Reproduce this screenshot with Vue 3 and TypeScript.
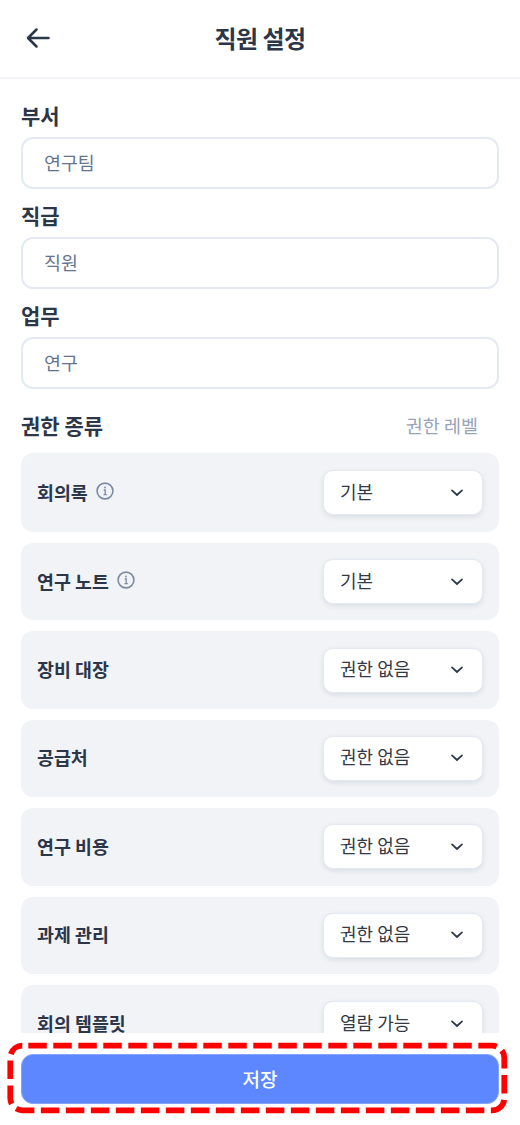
<script setup lang="ts">
interface Field { label: string; value: string }
interface Perm { name: string; level: string; info?: boolean }
const fields: Field[] = [
  { label: '부서', value: '연구팀' },
  { label: '직급', value: '직원' },
  { label: '업무', value: '연구' },
]
const perms: Perm[] = [
  { name: '회의록', level: '기본', info: true },
  { name: '연구 노트', level: '기본', info: true },
  { name: '장비 대장', level: '권한 없음' },
  { name: '공급처', level: '권한 없음' },
  { name: '연구 비용', level: '권한 없음' },
  { name: '과제 관리', level: '권한 없음' },
  { name: '회의 템플릿', level: '열람 가능' },
]
</script>

<template>
  <div class="screen">
    <header class="header">
      <svg class="back" width="26" height="26" viewBox="0 0 26 26" fill="none" stroke="#2b3648" stroke-width="2.5" stroke-linecap="round" stroke-linejoin="round">
        <path d="M23.5 13H3.5M11.5 4.5 3 13l8.5 8.5" />
      </svg>
      <h1 class="title">직원 설정</h1>
    </header>

    <main class="content">
      <div v-for="f in fields" :key="f.label" class="field">
        <div class="label">{{ f.label }}</div>
        <div class="input">{{ f.value }}</div>
      </div>

      <div class="perm-head">
        <span class="label">권한 종류</span>
        <span class="perm-level">권한 레벨</span>
      </div>

      <div class="perm-list">
        <div v-for="p in perms" :key="p.name" class="perm">
          <div class="perm-name">
            <span>{{ p.name }}</span>
            <svg class="info" width="18" height="18" v-if="p.info" viewBox="0 0 18 18" fill="none" stroke="#7c8aa3">
              <circle cx="9" cy="9" r="7.9" stroke-width="1.6" />
              <path d="M7.7 8h1.5v4.6M7.5 12.7h3.3" stroke-width="1.3" />
              <circle cx="9" cy="5.5" r="0.9" fill="#7c8aa3" stroke="none" />
            </svg>
          </div>
          <div class="select">
            <span class="select-text">{{ p.level }}</span>
            <svg width="14" height="14" viewBox="0 0 14 14" fill="none" stroke="#2b3648" stroke-width="1.7" stroke-linecap="round" stroke-linejoin="round">
              <path d="M2 4.4 7 9 12 4.4" />
            </svg>
          </div>
        </div>
      </div>
    </main>

    <footer class="footer">
      <button class="save" type="button">저장</button>
      <svg class="annotation" width="520" height="92" viewBox="0 0 520 92" fill="none">
        <rect x="10.3" y="12.7" width="494" height="64.6" rx="12" stroke="#fe0000" stroke-width="5.8" stroke-dasharray="18.5 6.5" stroke-dashoffset="19" />
      </svg>
    </footer>
  </div>
</template>

<style>
html, body { margin: 0; background: #fff; }
</style>

<style scoped>
.screen {
  width: 520px;
  height: 1125px;
  display: flex;
  flex-direction: column;
  overflow: hidden;
  background: #fff;
  font-family: "Noto Sans CJK KR", "Noto Sans", sans-serif;
  color: #2b3648;
}
.header {
  flex: none;
  height: 79px;
  box-sizing: border-box;
  position: relative;
  display: flex;
  align-items: center;
  justify-content: center;
  border-bottom: 2px solid #f1f3f7;
}
.back { position: absolute; left: 25px; top: 25px; }
.title { margin: 0 0 2px; font-size: 24px; font-weight: 700; letter-spacing: -0.6px; line-height: 1; }
.content {
  flex: 1;
  min-height: 0;
  overflow: hidden;
  padding: 22px 21px 0;
}
.field { margin-bottom: 12px; }
.label { font-size: 21px; font-weight: 700; line-height: 28px; }
.field .label { margin-bottom: 8px; }
.input {
  box-sizing: border-box;
  height: 52px;
  border: 2px solid #e4e9f4;
  border-radius: 12px;
  padding: 0 21px 2px;
  display: flex;
  align-items: center;
  font-size: 18.4px;
  color: #66758f;
}
.perm-head {
  display: flex;
  justify-content: space-between;
  align-items: center;
  height: 30px;
  margin: 0 0 13px;
  padding-top: 9px;
}
.perm-level { font-size: 18.5px; color: #98a4b8; margin-right: 21px; }
.perm-list { display: flex; flex-direction: column; gap: 11px; }
.perm {
  box-sizing: border-box;
  height: 77.4px;
  flex: none;
  background: #f1f3f6;
  border-radius: 12px;
  padding: 0 16px;
  display: flex;
  align-items: center;
  justify-content: space-between;
}
.perm:first-child { height: 79px; }
.perm-name {
  display: flex;
  align-items: center;
  gap: 8px;
  padding-bottom: 2px;
  font-size: 18.4px;
  font-weight: 700;
}
.info { margin-bottom: 2px; }
.select {
  box-sizing: border-box;
  width: 160px;
  height: 45px;
  background: #fff;
  border: 1.5px solid #e4e9f4;
  border-radius: 10px;
  box-shadow: 0 2px 5px rgba(80, 90, 120, 0.14);
  padding: 0 18px 0 16px;
  display: flex;
  align-items: center;
  justify-content: space-between;
  font-size: 18px;
  color: #333a46;
}
.select-text { padding-bottom: 4px; }
.footer {
  flex: none;
  height: 92px;
  position: relative;
  background: #fff;
  padding: 21px 21px 0;
  box-sizing: border-box;
}
.save {
  display: block;
  width: 100%;
  height: 50px;
  padding: 0 0 2px;
  border: 1px solid #84a4ff;
  border-radius: 12px;
  background: #5c87ff;
  color: #fff;
  font: 500 19px "Noto Sans CJK KR", sans-serif;
}
.annotation { position: absolute; left: 0; top: 0; }
</style>
